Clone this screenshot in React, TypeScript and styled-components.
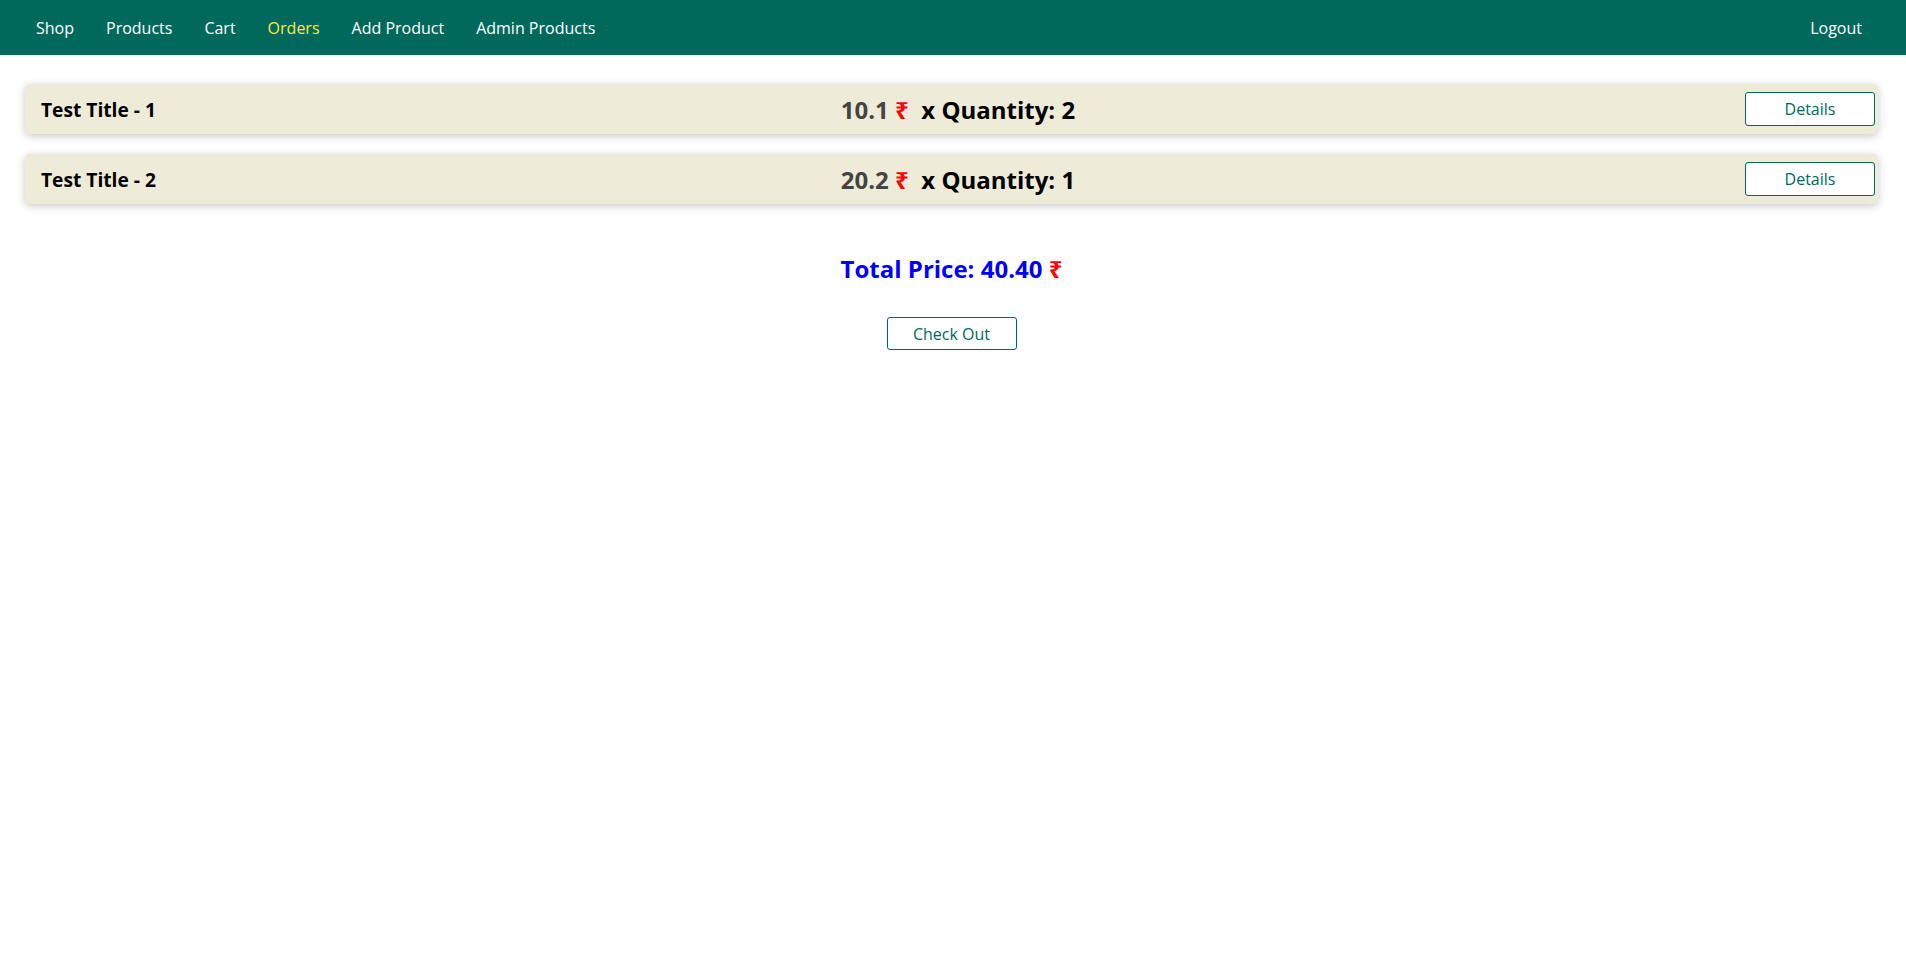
import React from "react";
import styled, { createGlobalStyle } from "styled-components";

const GlobalStyle = createGlobalStyle`
  * { box-sizing: border-box; }
  html, body { margin: 0; padding: 0; background: #ffffff; }
  body { font-family: "Open Sans", "Noto Sans", sans-serif; }
`;

const Header = styled.header`
  height: 55px;
  background: #00695c;
  display: flex;
  align-items: center;
  justify-content: space-between;
  padding: 0 44px 0 36px;
`;

const NavList = styled.nav`
  display: flex;
  align-items: center;
  gap: 32px;
`;

const NavLink = styled.a<{ $active?: boolean }>`
  font-size: 16px;
  color: ${(p) => (p.$active ? "#ffeb3b" : "#ffffff")};
  text-decoration: none;
  cursor: pointer;
`;

const Main = styled.main`
  padding: 29px 28px 0 25px;
`;

const OrderList = styled.ul`
  list-style: none;
  margin: 0;
  padding: 0;
  display: flex;
  flex-direction: column;
  gap: 20px;
`;

const OrderRow = styled.li`
  height: 50px;
  background: #eeecd8;
  border-radius: 5px;
  box-shadow: 0 2px 8px rgba(0, 0, 0, 0.22);
  display: grid;
  grid-template-columns: 1fr auto 1fr;
  align-items: center;
  padding: 0 3px 0 16px;
`;

const Title = styled.h1`
  margin: 0;
  font-size: 19.2px;
  font-weight: 700;
  color: #000000;
`;

const PriceLine = styled.h2`
  margin: 0;
  font-size: 24px;
  font-weight: 700;
  color: #000000;
  white-space: nowrap;
`;

const Amount = styled.span`
  color: #444444;
`;

const Rupee = styled.span`
  color: #ff0000;
`;

const Actions = styled.div`
  display: flex;
  justify-content: flex-end;
`;

const OutlineButton = styled.button<{ $height?: number }>`
  width: 130px;
  height: ${(p) => p.$height ?? 34}px;
  background: #ffffff;
  border: 1px solid #00695c;
  border-radius: 3px;
  color: #00695c;
  font-family: "Open Sans", "Noto Sans", sans-serif;
  font-size: 16px;
  cursor: pointer;
  padding: 0;
`;

const Summary = styled.section`
  display: flex;
  flex-direction: column;
  align-items: center;
  padding-top: 48px;
  gap: 31px;
`;

const TotalPrice = styled.h2`
  margin: 0;
  font-size: 24px;
  font-weight: 700;
  color: #0000ff;
  line-height: 34px;
`;

const orders = [
  { id: 1, title: "Test Title - 1", price: "10.1", qty: 2 },
  { id: 2, title: "Test Title - 2", price: "20.2", qty: 1 },
];

export default function App() {
  return (
    <>
      <GlobalStyle />
      <Header>
        <NavList>
          <NavLink>Shop</NavLink>
          <NavLink>Products</NavLink>
          <NavLink>Cart</NavLink>
          <NavLink $active>Orders</NavLink>
          <NavLink>Add Product</NavLink>
          <NavLink>Admin Products</NavLink>
        </NavList>
        <NavLink>Logout</NavLink>
      </Header>
      <Main>
        <OrderList>
          {orders.map((o) => (
            <OrderRow key={o.id}>
              <Title>{o.title}</Title>
              <PriceLine>
                <Amount>{o.price}</Amount> <Rupee>₹</Rupee>&nbsp; x Quantity: {o.qty}
              </PriceLine>
              <Actions>
                <OutlineButton>Details</OutlineButton>
              </Actions>
            </OrderRow>
          ))}
        </OrderList>
        <Summary>
          <TotalPrice>
            Total Price: 40.40 <Rupee>₹</Rupee>
          </TotalPrice>
          <OutlineButton $height={33}>Check Out</OutlineButton>
        </Summary>
      </Main>
    </>
  );
}
